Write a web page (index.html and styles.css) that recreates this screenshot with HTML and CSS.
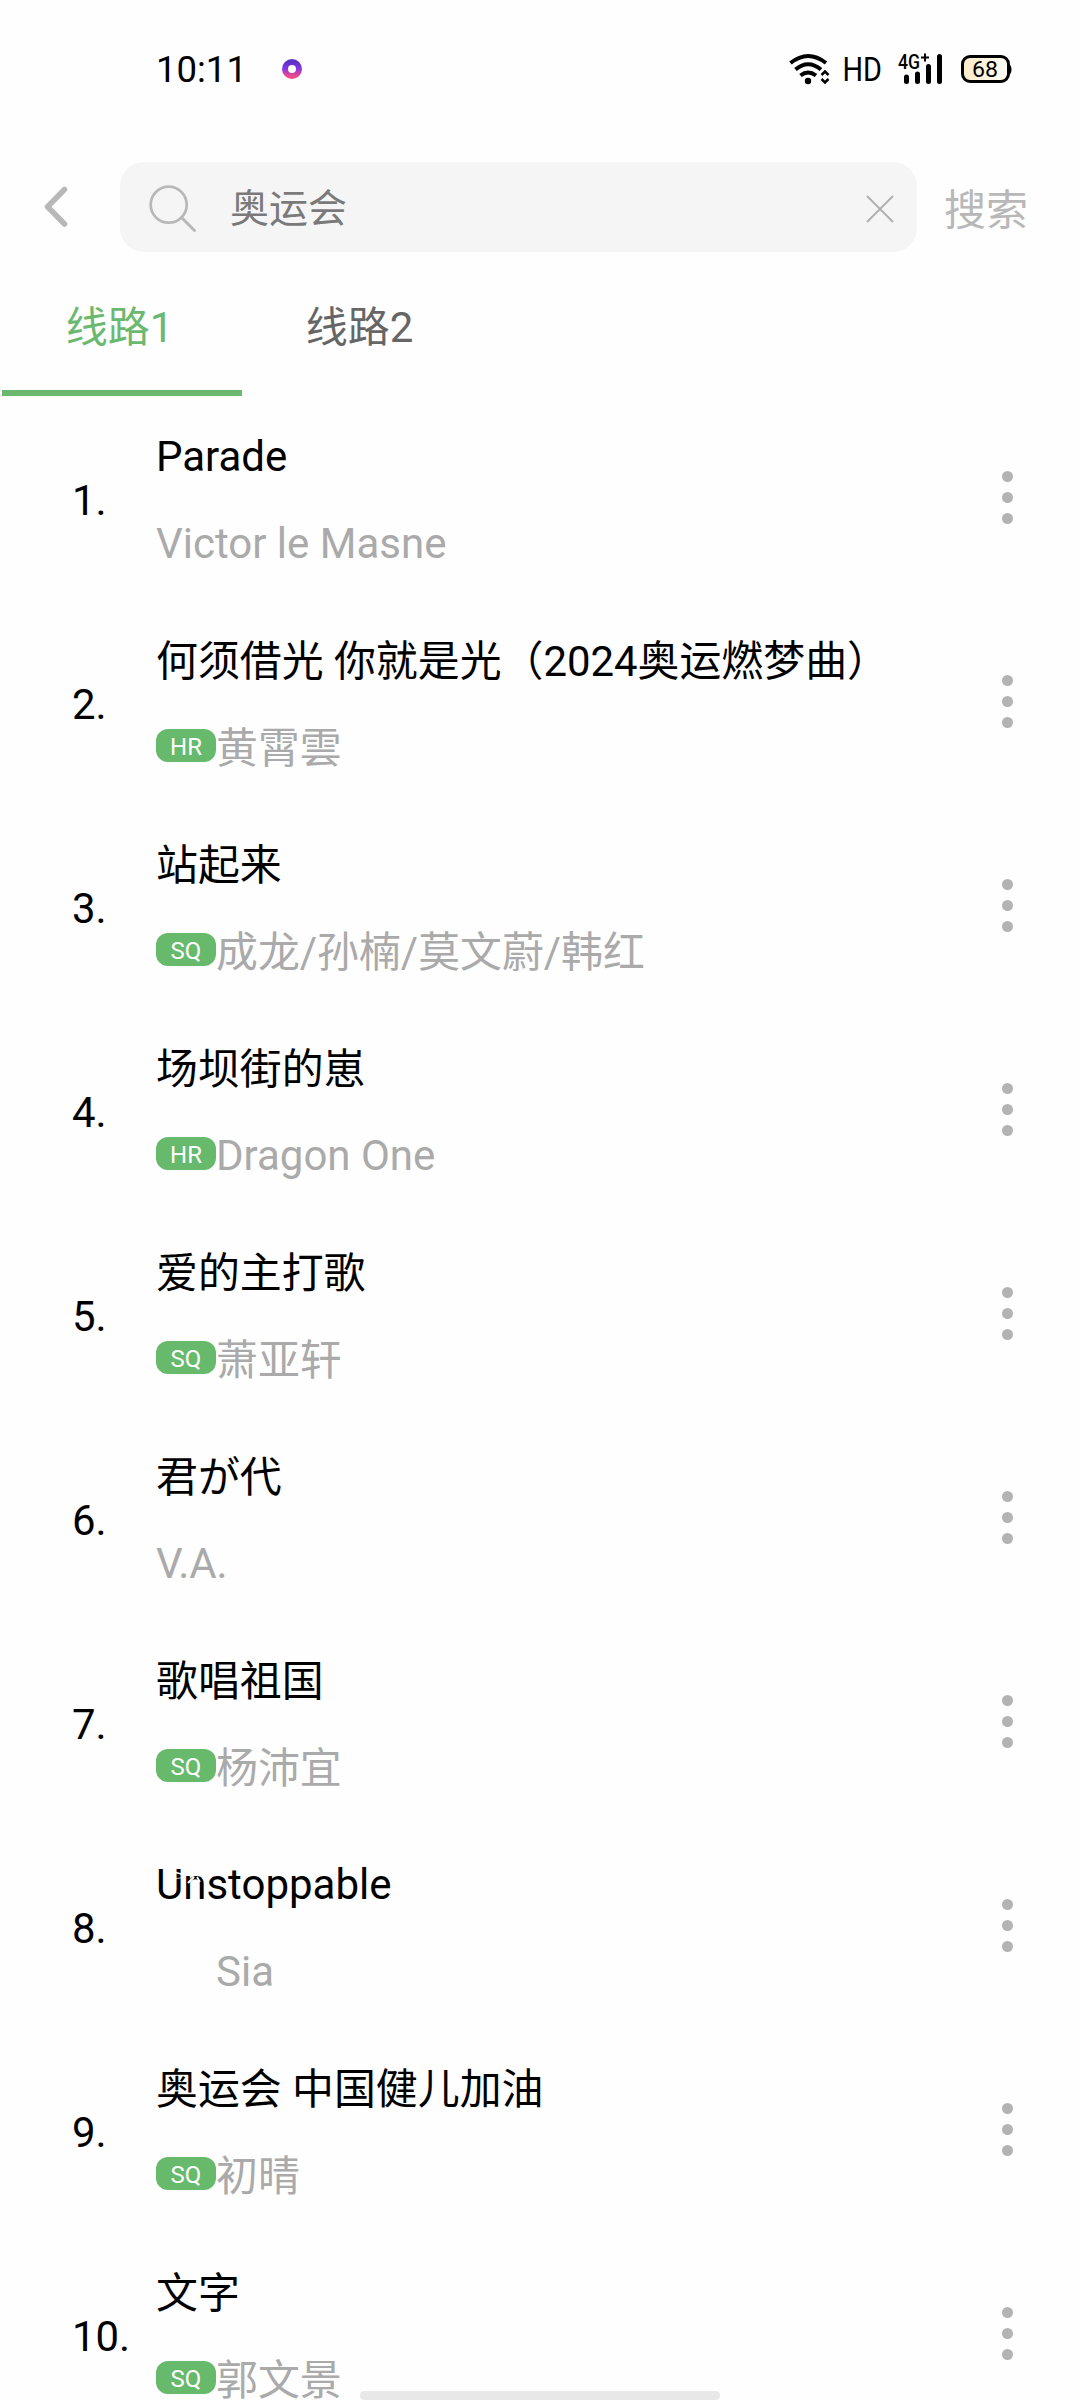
FILE: index.html
```html
<!DOCTYPE html>
<html lang="zh-CN">
<head>
<meta charset="utf-8">
<title>搜索</title>
<link rel="stylesheet" href="styles.css">
</head>
<body>
<div class="screen">
  <header class="status">
    <span class="time">10:11</span>
    <svg class="ring" width="20" height="20" viewBox="0 0 20 20"><defs><linearGradient id="ringFill" x1="0" y1="0" x2="0" y2="1"><stop offset="0" stop-color="#5a32c8"/><stop offset=".45" stop-color="#8236e6"/><stop offset="1" stop-color="#ee4a8c"/></linearGradient></defs><circle cx="10" cy="10" r="7" fill="none" stroke="url(#ringFill)" stroke-width="6"/></svg>
    <svg class="indicators" width="226" height="46" viewBox="786 46 226 46">
      <g fill="none" stroke="#000" stroke-width="4">
        <path d="M790.5 63Q808 49 826 63"/>
        <path d="M795.5 69.5Q808 59 821 69.5"/>
        <path d="M800.5 75.5Q808 69.500 816 75.500"/>
        <path d="M821.500 75L825 71.500L828.500 75M821.500 79L825 82.500L828.500 79" stroke-width="2.500"/>
      </g>
      <circle cx="808" cy="81" r="3.200"/>
      <text class="hd" x="842.500" y="81" textLength="39.500" lengthAdjust="spacingAndGlyphs">HD</text>
      <text class="net" x="898" y="68.500" textLength="22" lengthAdjust="spacingAndGlyphs">4G</text>
      <path d="M921 57.500H929M925 53.500V61.500" stroke="#000" stroke-width="2"/>
      <path d="M906.500 77V81.500M917.500 74V81.500M928.500 66.500V81.500M939.500 56.500V81.500" stroke="#000" stroke-width="5" stroke-linecap="round"/>
      <defs><linearGradient id="charge"><stop offset="0" stop-color="#fdebc8"/><stop offset="1" stop-color="#fffdf6"/></linearGradient></defs>
      <rect x="962.500" y="56.500" width="46" height="25" rx="7.500" fill="url(#charge)" stroke="#000" stroke-width="3"/>
      <path d="M1009 64q2.500 1.500 2.500 5.500t-2.500 5.500z"/>
      <text class="level" x="972" y="76.500" textLength="26" lengthAdjust="spacingAndGlyphs">68</text>
    </svg>
  </header>

  <div class="searchbar">
    <svg class="back" width="30" height="46" viewBox="0 0 30 46"><path d="M23.500 5.500L6.500 22.700L23.500 40" fill="none" stroke="#b8b8b8" stroke-width="5.500" stroke-linecap="round" stroke-linejoin="round"/></svg>
    <div class="field">
      <svg class="lens" width="50" height="50" viewBox="0 0 50 50" fill="none" stroke="#b8b8b8"><circle cx="20.700" cy="20.700" r="18" stroke-width="2.700"/><path d="M34 34L46.500 46.500" stroke-width="3" stroke-linecap="round"/></svg>
      <span class="query">奥运会</span>
      <svg class="clear" width="28" height="28" viewBox="0 0 28 28"><path d="M1 1L27 27M27 1L1 27" stroke="#b0b0b0" stroke-width="2"/></svg>
    </div>
    <span class="submit">搜索</span>
  </div>

  <nav class="tabs">
    <span class="tab active">线路1</span>
    <span class="tab">线路2</span>
  </nav>

  <ol class="songs">
    <li class="song"><span class="num">1.</span><div class="info"><div class="title latin">Parade</div><div class="artist latin">Victor le Masne</div></div><div class="more"><i></i><i></i><i></i></div></li>
    <li class="song"><span class="num">2.</span><div class="info"><div class="title">何须借光 你就是光（2024奥运燃梦曲）</div><div class="artist"><b class="badge">HR</b>黄霄雲</div></div><div class="more"><i></i><i></i><i></i></div></li>
    <li class="song"><span class="num">3.</span><div class="info"><div class="title">站起来</div><div class="artist"><b class="badge">SQ</b>成龙/孙楠/莫文蔚/韩红</div></div><div class="more"><i></i><i></i><i></i></div></li>
    <li class="song"><span class="num">4.</span><div class="info"><div class="title">场坝街的崽</div><div class="artist latin"><b class="badge">HR</b>Dragon One</div></div><div class="more"><i></i><i></i><i></i></div></li>
    <li class="song"><span class="num">5.</span><div class="info"><div class="title">爱的主打歌</div><div class="artist"><b class="badge">SQ</b>萧亚轩</div></div><div class="more"><i></i><i></i><i></i></div></li>
    <li class="song"><span class="num">6.</span><div class="info"><div class="title">君が代</div><div class="artist latin">V.A.</div></div><div class="more"><i></i><i></i><i></i></div></li>
    <li class="song"><span class="num">7.</span><div class="info"><div class="title">歌唱祖国</div><div class="artist"><b class="badge">SQ</b>杨沛宜</div></div><div class="more"><i></i><i></i><i></i></div></li>
    <li class="song"><span class="num">8.</span><div class="info"><div class="title latin">Unstoppable<svg class="scratch" width="50" height="20" viewBox="0 0 50 20" fill="none" stroke="#fefefe"><path d="M18 4L27 6.500" stroke-width="1.800"/><path d="M18 11L27 9.500" stroke-width=".8"/><path d="M32 15L38 9" stroke-width="2.200"/><path d="M41 9L44 14" stroke-width="1.800"/></svg></div><div class="artist latin unbadged">Sia</div></div><div class="more"><i></i><i></i><i></i></div></li>
    <li class="song"><span class="num">9.</span><div class="info"><div class="title">奥运会 中国健儿加油</div><div class="artist"><b class="badge">SQ</b>初晴</div></div><div class="more"><i></i><i></i><i></i></div></li>
    <li class="song"><span class="num">10.</span><div class="info"><div class="title">文字</div><div class="artist"><b class="badge">SQ</b>郭文景</div></div><div class="more"><i></i><i></i><i></i></div></li>
  </ol>
  <div class="home"></div>
</div>
</body>
</html>
```
FILE: styles.css
```css
* { box-sizing: border-box; }
body { margin: 0; background: #fefefe; font-family: Roboto, "Noto Sans CJK SC", sans-serif; color: #000; }
svg { display: block; flex: none; overflow: visible; }
.screen { position: relative; width: 1080px; height: 2400px; overflow: hidden; }

.status { display: flex; align-items: center; height: 138px; padding: 0 68px 0 156px; }
.time { width: 126px; padding-top: 1px; font-size: 36.5px; line-height: 44px; white-space: nowrap; }
.indicators { margin-left: auto; }
.hd { font-size: 33px; }
.net { font-size: 20px; font-weight: 500; }
.level { font-size: 22px; }

.searchbar { display: flex; align-items: center; height: 138px; padding-left: 41px; }
.back { margin-right: 49px; }
.field { display: flex; align-items: center; width: 797px; height: 90px; padding: 3px 23px 0 28px; border-radius: 24px; background: #f5f5f5; }
.query { flex: 1; margin-left: 32px; font-size: 39px; line-height: 60px; color: #7a7a7a; }
.submit { margin-left: 27px; padding-top: 7px; font-size: 42px; line-height: 60px; color: #b8b8b8; }

.tabs { display: flex; height: 120px; padding-left: 2px; }
.tab { width: 240px; height: 120px; padding: 22px 5px 0 0; border-bottom: 6px solid transparent; font-size: 42px; line-height: 60px; text-align: center; color: #666; }
.tab.active { color: #6bb86f; border-color: #6bb86f; }

.songs { margin: 0; padding: 0; list-style: none; }
.song { display: flex; align-items: center; height: 204px; padding-right: 67.5px; font-size: 41.9px; line-height: 60px; white-space: nowrap; }
.num { width: 156px; padding: 6px 0 0 72px; }
.info { flex: 1; padding-top: 6px; }
.title { position: relative; height: 60px; margin-bottom: 27px; }
.artist { display: flex; height: 60px; color: #aaa; }
.latin { font-size: 42px; line-height: 58px; }
.unbadged { padding-left: 60px; }
.badge { width: 60px; height: 33px; margin-top: 10px; border-radius: 12px; background: #67b96c; color: #fff; font-size: 24px; font-weight: 400; line-height: 36px; text-align: center; }
.more { display: flex; flex-direction: column; gap: 10px; margin-top: -1px; }
.more i { width: 11px; height: 11px; border-radius: 50%; background: #b3b3b3; }
.scratch { position: absolute; left: 0; top: 12px; }

.home { position: absolute; left: 360px; top: 2391px; width: 360px; height: 9px; border-radius: 5px; background: #e8e8e8; }
```
